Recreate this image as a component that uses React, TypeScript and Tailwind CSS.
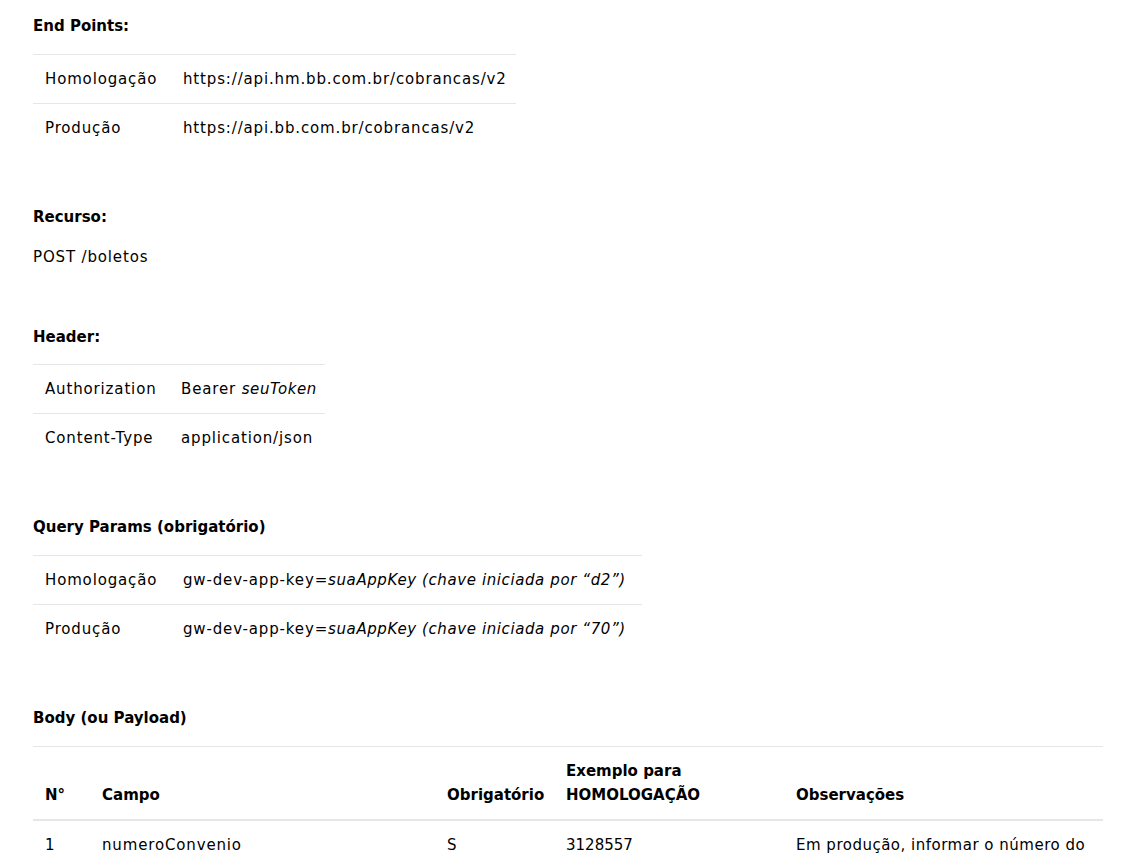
import React from "react";

const font = { fontFamily: '"DejaVu Sans", "Liberation Sans", sans-serif' };

function KV({ rows, w, w1, w2 }: { rows: [React.ReactNode, React.ReactNode][]; w: string; w1: string; w2: string }) {
  return (
    <table className={"border-collapse table-fixed " + w}>
      <colgroup>
        <col className={w1} />
        <col className={w2} />
      </colgroup>
      <tbody>
        {rows.map((r, i) => (
          <tr key={i} className="border-t border-[#e6e6e6]">
            <td className="px-3 py-3 leading-6 whitespace-nowrap">{r[0]}</td>
            <td className="px-3 py-3 leading-6 whitespace-nowrap">{r[1]}</td>
          </tr>
        ))}
      </tbody>
    </table>
  );
}

const Em = ({ children }: { children: React.ReactNode }) => (
  <em className="tracking-[0.6px]">{children}</em>
);

export default function App() {
  return (
    <div className="bg-white min-h-[860px] pl-[33px] pt-[14px] text-[15px] text-black tracking-[0.85px]" style={font}>
      <p className="font-bold leading-6 tracking-normal">End Points:</p>
      <div className="mt-4">
        <KV
          w="w-[483px]"
          w1="w-[138px]"
          w2="w-[345px]"
          rows={[
            ["Homologação", "https://api.hm.bb.com.br/cobrancas/v2"],
            ["Produção", "https://api.bb.com.br/cobrancas/v2"],
          ]}
        />
      </div>

      <p className="font-bold leading-6 tracking-normal mt-[53px]">Recurso:</p>
      <p className="leading-6 mt-4">POST /boletos</p>

      <p className="font-bold leading-6 tracking-normal mt-14">Header:</p>
      <div className="mt-[15px]">
        <KV
          w="w-[292px]"
          w1="w-[136px]"
          w2="w-[156px]"
          rows={[
            ["Authorization", <>Bearer <Em>seuToken</Em></>],
            ["Content-Type", "application/json"],
          ]}
        />
      </div>

      <p className="font-bold leading-6 tracking-normal mt-[53px]">Query Params (obrigatório)</p>
      <div className="mt-4">
        <KV
          w="w-[609px]"
          w1="w-[138px]"
          w2="w-[471px]"
          rows={[
            ["Homologação", <>gw-dev-app-key=<Em>suaAppKey (chave iniciada por “d2”)</Em></>],
            ["Produção", <>gw-dev-app-key=<Em>suaAppKey (chave iniciada por “70”)</Em></>],
          ]}
        />
      </div>

      <p className="font-bold leading-6 tracking-normal mt-[53px]">Body (ou Payload)</p>
      <div className="mt-4">
        <table className="border-collapse table-fixed w-[1070px]">
          <colgroup>
            <col className="w-[57px]" />
            <col className="w-[345px]" />
            <col className="w-[119px]" />
            <col className="w-[230px]" />
            <col className="w-[319px]" />
          </colgroup>
          <thead>
            <tr className="border-t border-[#e6e6e6] border-b-2 border-b-[#e6e6e6] text-left align-bottom tracking-normal">
              <th className="px-3 py-3 leading-6 font-bold">N°</th>
              <th className="px-3 py-3 leading-6 font-bold">Campo</th>
              <th className="px-3 py-3 leading-6 font-bold">Obrigatório</th>
              <th className="px-3 py-3 leading-6 font-bold">Exemplo para<br />HOMOLOGAÇÃO</th>
              <th className="px-3 py-3 leading-6 font-bold">Observações</th>
            </tr>
          </thead>
          <tbody>
            <tr className="align-top">
              <td className="px-3 pt-3 pb-3 leading-6">1</td>
              <td className="px-3 pt-3 pb-3 leading-6">numeroConvenio</td>
              <td className="px-3 pt-3 pb-3 leading-6">S</td>
              <td className="px-3 pt-3 pb-3 leading-6 tracking-normal">3128557</td>
              <td className="px-3 pt-3 pb-3 leading-6 tracking-[0.5px]">Em produção, informar o número do convênio de cobrança.</td>
            </tr>
          </tbody>
        </table>
      </div>
    </div>
  );
}
